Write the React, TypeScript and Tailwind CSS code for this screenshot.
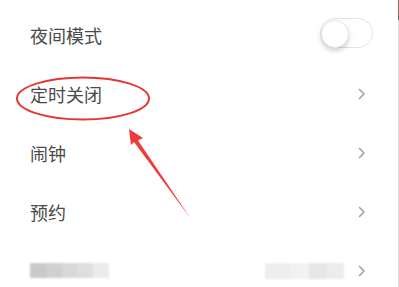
import React from 'react';

const Chevron = () => (
    <svg width="8" height="12" viewBox="0 0 8 12" className="mr-[7px]">
        <polyline points="1.5,1.5 6,6 1.5,10.5" fill="none" stroke="#a0a0a0" strokeWidth="1.6" strokeLinecap="round" strokeLinejoin="round" />
    </svg>
);

const Toggle = () => (
    <div className="relative -mt-[3px] h-[30px] w-[53px] rounded-full border border-[#e2e2e2] bg-white">
        <div className="absolute left-[0px] top-[1px] h-[28px] w-[28px] rounded-full border border-[#e6e6e6] bg-white shadow-[0_3px_5px_rgba(0,0,0,0.18)]" />
    </div>
);

interface RowProps {
    label: string;
    toggle?: boolean;
}

const Row: React.FC<RowProps> = ({ label, toggle }) => (
    <div className="flex h-[59px] shrink-0 items-center justify-between">
        <span className="text-[18px] leading-none text-[#4a4a4a]">{label}</span>
        <div className="flex w-[53px] items-center justify-end">
            {toggle ? <Toggle /> : <Chevron />}
        </div>
    </div>
);

export default function App() {
    return (
        <div
            className="relative h-[287px] w-[399px] overflow-hidden bg-white"
            style={{ fontFamily: '"Noto Sans CJK SC", "Noto Sans", sans-serif' }}
        >
            <div className="flex h-full flex-col border-r border-[#dedede] pl-[30px] pr-[25px] pt-[5px]">
                <Row label="夜间模式" toggle />
                <Row label="定时关闭" />
                <Row label="闹钟" />
                <Row label="预约" />
                {/* blurred last row */}
                <div className="flex h-[59px] shrink-0 items-center justify-between">
                    <div className="flex h-[15px] w-[79px] blur-[1px]">
                        <div className="flex-1 bg-[#c9c9c9]" />
                        <div className="flex-1 bg-[#d0d0d0]" />
                        <div className="flex-1 bg-[#d8d8d8]" />
                        <div className="flex-1 bg-[#dedede]" />
                        <div className="flex-1 bg-[#ebebeb]" />
                    </div>
                    <div className="flex items-center">
                        <div className="mr-[14px] flex h-[16px] w-[79px] blur-[1px]">
                            <div className="flex-[3] bg-[#eeeeee]" />
                            <div className="flex-[2] bg-[#f2f2f2]" />
                            <div className="flex-[2] bg-[#e6e6e6]" />
                            <div className="flex-[2] bg-[#ececec]" />
                        </div>
                        <Chevron />
                    </div>
                </div>
            </div>
            <div className="absolute right-0 top-0 h-[20px] w-[1px] bg-[#8a6a5a]" />

            {/* annotation overlay */}
            <svg className="pointer-events-none absolute left-0 top-0" width="399" height="287" viewBox="0 0 399 287">
                <ellipse cx="83" cy="98.5" rx="66" ry="21" fill="none" stroke="#e53535" strokeWidth="2" />
                <polygon points="129,129 143,138 138,140.5 191,219 134,142 131,145" fill="#f03a3a" />
            </svg>
        </div>
    );
}
